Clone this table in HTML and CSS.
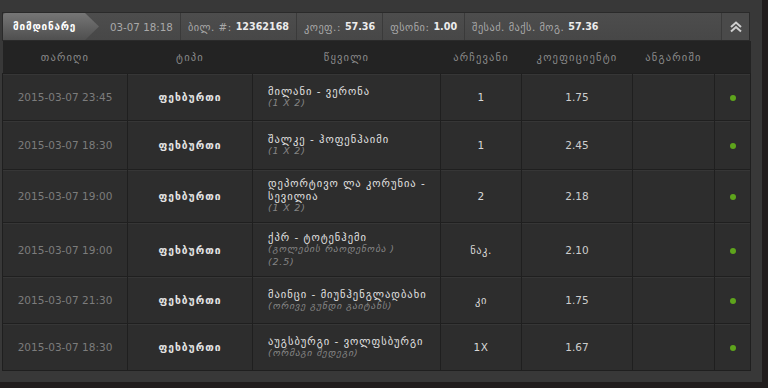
FILE: index.html
```html
<!DOCTYPE html>
<html lang="ka">
<head>
<meta charset="utf-8">
<link rel="stylesheet" href="styles.css">
</head>
<body>
<div class="panel">
  <div class="bar">
    <div class="tab">მიმდინარე</div>
    <div class="item first">03-07 18:18</div>
    <div class="item"><span class="lbl">ბილ. #:</span><b>12362168</b></div>
    <div class="item"><span class="lbl">კოეფ.:</span><b>57.36</b></div>
    <div class="item"><span class="lbl">ფსონი:</span><b>1.00</b></div>
    <div class="item"><span class="lbl">შესაძ. მაქს. მოგ.</span><b>57.36</b></div>
    <div class="spacer"></div>
    <div class="toggle">
      <svg width="14" height="13" viewBox="0 0 14 13"><path d="M2 7 L7 2.5 L12 7 M2 11.5 L7 7 L12 11.5" fill="none" stroke="#cfcfcf" stroke-width="2"/></svg>
    </div>
  </div>
  <table class="bets">
    <colgroup>
      <col class="c-date"><col class="c-type"><col class="c-pair"><col class="c-choice"><col class="c-coef"><col class="c-acc"><col class="c-dot">
    </colgroup>
    <thead>
      <tr><th>თარიღი</th><th>ტიპი</th><th>წყვილი</th><th>არჩევანი</th><th>კოეფიციენტი</th><th>ანგარიში</th><th></th></tr>
    </thead>
    <tbody>
      <tr class="r2">
        <td class="date">2015-03-07 23:45</td><td class="type">ფეხბურთი</td>
        <td class="pair"><div class="name">მილანი - ვერონა</div><div class="sub">(1 X 2)</div></td>
        <td class="choice">1</td><td class="coef">1.75</td><td></td><td class="st"><span class="dot"></span></td>
      </tr>
      <tr class="r2b">
        <td class="date">2015-03-07 18:30</td><td class="type">ფეხბურთი</td>
        <td class="pair"><div class="name">შალკე - ჰოფენჰაიმი</div><div class="sub">(1 X 2)</div></td>
        <td class="choice">1</td><td class="coef">2.45</td><td></td><td class="st"><span class="dot"></span></td>
      </tr>
      <tr class="r3">
        <td class="date">2015-03-07 19:00</td><td class="type">ფეხბურთი</td>
        <td class="pair"><div class="name">დეპორტივო ლა კორუნია - სევილია</div><div class="sub">(1 X 2)</div></td>
        <td class="choice">2</td><td class="coef">2.18</td><td></td><td class="st"><span class="dot"></span></td>
      </tr>
      <tr class="r3b">
        <td class="date">2015-03-07 19:00</td><td class="type">ფეხბურთი</td>
        <td class="pair"><div class="name">ქპრ - ტოტენჰემი</div><div class="sub">(გოლების რაოდენობა )</div><div class="sub">(2.5)</div></td>
        <td class="choice">ნაკ.</td><td class="coef">2.10</td><td></td><td class="st"><span class="dot"></span></td>
      </tr>
      <tr class="r2">
        <td class="date">2015-03-07 21:30</td><td class="type">ფეხბურთი</td>
        <td class="pair"><div class="name">მაინცი - მიუნჰენგლადბახი</div><div class="sub">(ორივე გუნდი გაიტანს)</div></td>
        <td class="choice">კი</td><td class="coef">1.75</td><td></td><td class="st"><span class="dot"></span></td>
      </tr>
      <tr class="r2">
        <td class="date">2015-03-07 18:30</td><td class="type">ფეხბურთი</td>
        <td class="pair"><div class="name">აუგსბურგი - ვოლფსბურგი</div><div class="sub">(ორმაგი შედეგი)</div></td>
        <td class="choice">1X</td><td class="coef">1.67</td><td></td><td class="st"><span class="dot"></span></td>
      </tr>
    </tbody>
  </table>
</div>
</body>
</html>
```

FILE: styles.css
```css
html, body {
  margin: 0;
  padding: 0;
}
body {
  background: #211d1d;
  width: 768px;
  height: 388px;
  overflow: hidden;
  font-family: "DejaVu Sans", sans-serif;
}
.panel {
  width: 762px;
  height: 382px;
  box-sizing: border-box;
  background: #383838;
  padding: 12px 12px 0 2px;
}
.bar {
  display: flex;
  align-items: stretch;
  height: 29px;
  box-sizing: border-box;
  width: 748px;
  background: linear-gradient(#4d4d4d, #474747);
  border: 1px solid #2a2a2a;
  font-size: 10.3px;
  color: #a9a9a9;
}
.tab {
  width: 96px;
  box-sizing: border-box;
  padding-left: 10px;
  display: flex;
  align-items: center;
  color: #fff;
  font-weight: bold;
  font-size: 10px;
  letter-spacing: 0.8px;
  background: linear-gradient(#767676, #4f4f4f);
  clip-path: polygon(0 0, calc(100% - 14px) 0, 100% 50%, calc(100% - 14px) 100%, 0 100%);
  border-radius: 3px 0 0 0;
}
.item {
  display: flex;
  align-items: center;
  padding: 0 7px;
  border-left: 1px solid #3a3a3a;
  white-space: nowrap;
}
.item.first {
  border-left: none;
  padding-left: 11px;
  padding-right: 7px;
}
.lbl {
  letter-spacing: 0.5px;
}
.item b {
  color: #ececec;
  font-size: 9.6px;
  margin-left: 4px;
}
.spacer {
  flex: 1;
}
.toggle {
  width: 27px;
  display: flex;
  align-items: center;
  justify-content: center;
  border-left: 1px solid #3a3a3a;
  background: #4a4a4a;
}
.bets {
  width: 748px;
  border-collapse: collapse;
  table-layout: fixed;
  font-size: 10.5px;
}
.c-date { width: 125px; }
.c-type { width: 125px; }
.c-pair { width: 188px; }
.c-choice { width: 81px; }
.c-coef { width: 111px; }
.c-acc { width: 82px; }
.c-dot { width: 36px; }
.bets th {
  height: 32px;
  padding: 0;
  background: #232323;
  color: #8b8b8b;
  font-weight: normal;
  font-size: 10.5px;
  letter-spacing: 1.2px;
  text-align: center;
}
.bets td {
  padding: 0;
  background: #2d2d2d;
  border: 1px solid #1f1f1f;
  box-shadow: inset 0 1px 0 #363636;
  text-align: center;
  color: #d8d8d8;
}
.r2 td { height: 46px; }
.r2b td { height: 48px; }
.r3 td { height: 52px; }
.r3b td { height: 53px; }
.bets td.date {
  color: #7c7c7c;
}
.bets td.type {
  color: #e4e4e4;
  font-weight: bold;
  font-size: 10.3px;
  letter-spacing: 1px;
}
.bets td.pair {
  text-align: left;
  padding-left: 15px;
  padding-right: 8px;
}
.name {
  color: #e2e2e2;
  line-height: 12.5px;
  letter-spacing: 1px;
}
.sub {
  color: #858585;
  font-style: italic;
  font-size: 9.5px;
  line-height: 12.5px;
  letter-spacing: 0.8px;
}
.bets td.choice {
  letter-spacing: 0.5px;
}
.bets td.coef {
  color: #cdcdcd;
}
.dot {
  display: inline-block;
  width: 6px;
  height: 6px;
  border-radius: 50%;
  background: #5ea41c;
  vertical-align: middle;
}
```
